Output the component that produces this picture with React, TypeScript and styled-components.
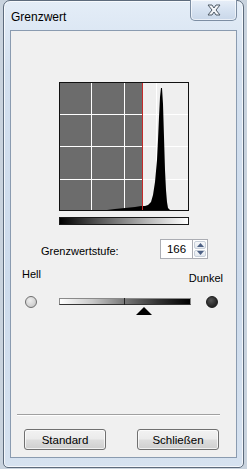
import React from 'react';
import styled, { createGlobalStyle } from 'styled-components';

const GlobalStyle = createGlobalStyle`
  html, body {
    margin: 0;
    padding: 0;
    background: #c9d3de;
    font-family: "Liberation Sans", Arial, sans-serif;
    font-size: 11px;
    color: #000;
  }
`;

const Window = styled.div`
  box-sizing: border-box;
  margin-left: 3px;
  width: 241px;
  height: 468px;
  border: 1px solid #5d6b7c;
  border-radius: 7px 7px 5px 5px;
  background: linear-gradient(180deg, #e4edf7 0%, #d3e0ef 15%, #cddbec 60%, #d6e2f0 100%);
  box-shadow: inset 0 0 0 1px rgba(255, 255, 255, 0.7);
  display: flex;
  flex-direction: column;
  padding: 0 6px 9px 6px;
`;

const TitleBar = styled.div`
  height: 29px;
  display: flex;
  align-items: flex-start;
  justify-content: space-between;
`;

const Title = styled.span`
  margin-top: 9px;
  margin-left: 1px;
  font-size: 12px;
  color: #000;
`;

const CloseButton = styled.div`
  box-sizing: border-box;
  width: 47px;
  height: 21px;
  margin-top: -1px;
  border: 1px solid #7d8ea3;
  border-top: none;
  border-radius: 0 0 5px 5px;
  background: linear-gradient(180deg, #e8eff8 0%, #d6e2f1 50%, #c9d7e9 100%);
  box-shadow: inset 0 0 0 1px rgba(255, 255, 255, 0.6);
  display: flex;
  align-items: center;
  justify-content: center;
`;

const Client = styled.div`
  flex: 1;
  border: 1px solid #8a9bb0;
  background: #f0f0f0;
  display: flex;
  flex-direction: column;
`;

const HistoBlock = styled.div`
  margin-top: 51px;
  padding-left: 48px;
  display: flex;
  flex-direction: column;
`;

const HistoBox = styled.div`
  width: 130px;
  height: 129px;
  display: flex;
`;

const GradientBar = styled.div`
  box-sizing: border-box;
  margin-top: 6px;
  width: 130px;
  height: 8px;
  border: 1px solid #1a1a1a;
  background: linear-gradient(90deg, #000 0%, #555 30%, #bbb 70%, #fff 100%);
`;

const LevelRow = styled.div`
  margin-top: 14px;
  padding-left: 30px;
  display: flex;
  align-items: center;
  height: 20px;
`;

const LevelLabel = styled.span`
  width: 119px;
  padding-top: 3px;
`;

const SpinInput = styled.div`
  box-sizing: border-box;
  width: 32px;
  height: 20px;
  border: 1px solid #abadb3;
  border-right: none;
  background: #fff;
  display: flex;
  align-items: center;
  justify-content: center;
  font-size: 11.5px;
`;

const SpinButtons = styled.div`
  box-sizing: border-box;
  width: 16px;
  height: 20px;
  border: 1px solid #abadb3;
  display: flex;
  flex-direction: column;
  background: #fff;
  padding: 1px;
  gap: 1px;
`;

const SpinHalf = styled.div`
  flex: 1;
  border: 1px solid #c7cfd9;
  border-radius: 2px;
  background: linear-gradient(180deg, #f6f8fa 0%, #e3e8ee 100%);
  display: flex;
  align-items: center;
  justify-content: center;
`;

const EndLabels = styled.div`
  margin-top: 9px;
  padding: 0 13px 0 11px;
  display: flex;
  justify-content: space-between;
  height: 25px;
`;

const EndLabel = styled.span<{ $low?: boolean }>`
  margin-top: ${p => (p.$low ? '4px' : '0')};
`;

const SliderRow = styled.div`
  padding-left: 14px;
  display: flex;
  align-items: flex-start;
  height: 22px;
`;

const Knob = styled.div<{ $dark?: boolean }>`
  box-sizing: border-box;
  width: 12px;
  height: 12px;
  margin-top: 3px;
  border-radius: 50%;
  border: 1px solid ${p => (p.$dark ? '#1a1a1a' : '#6e6e6e')};
  background: ${p =>
    p.$dark
      ? 'radial-gradient(circle at 40% 35%, #555 0%, #2a2a2a 60%, #1e1e1e 100%)'
      : 'radial-gradient(circle at 40% 35%, #eee 0%, #d2d2d2 60%, #bcbcbc 100%)'};
`;

const Track = styled.div`
  margin: 0 15px 0 22px;
  width: 132px;
  display: flex;
  flex-direction: column;
  align-items: stretch;
`;

const TrackBar = styled.div`
  box-sizing: border-box;
  position: relative;
  height: 7px;
  margin-top: 5px;
  border: 1px solid #8a8a8a;
  border-bottom-color: #333;
  background: linear-gradient(90deg, #fff 0%, #c8c8c8 25%, #777 50%, #333 75%, #000 100%);
`;

const Tick = styled.div`
  position: absolute;
  left: 64px;
  top: -1px;
  bottom: -1px;
  width: 1px;
  background: #222;
`;

const Pointer = styled.div`
  margin-top: 2px;
  margin-left: 77px;
  width: 0;
  height: 0;
  border-left: 8px solid transparent;
  border-right: 8px solid transparent;
  border-bottom: 8px solid #000;
`;

const Spacer = styled.div`
  flex: 1;
`;

const Separator = styled.div`
  margin: 0 16px 0 6px;
  height: 1px;
  background: #a0a0a0;
  border-bottom: 1px solid #fff;
`;

const ButtonRow = styled.div`
  margin-top: 13px;
  margin-bottom: 7px;
  padding: 0 17px 0 13px;
  display: flex;
  justify-content: space-between;
`;

const Button = styled.button`
  box-sizing: border-box;
  width: 82px;
  height: 21px;
  border: 1px solid #707070;
  border-radius: 3px;
  background: linear-gradient(180deg, #f2f2f2 0%, #ebebeb 48%, #dddddd 52%, #cfcfcf 100%);
  box-shadow: inset 0 0 0 1px rgba(255, 255, 255, 0.7);
  font-family: "Liberation Sans", Arial, sans-serif;
  font-size: 11.5px;
  color: #000;
  padding: 0;
`;

const Histogram = () => (
  <svg width="130" height="129" viewBox="0 0 130 129">
    <rect x="0" y="0" width="130" height="129" fill="#efefef" />
    <rect x="0" y="0" width="83" height="129" fill="#6c6c6c" />
    {[32, 65, 97].map(x => (
      <line key={'v' + x} x1={x + 0.5} y1="0" x2={x + 0.5} y2="129" stroke="#fff" strokeWidth="1" />
    ))}
    {[32, 64, 97].map(y => (
      <line key={'h' + y} x1="0" y1={y + 0.5} x2="130" y2={y + 0.5} stroke="#fff" strokeWidth="1" />
    ))}
    <path
      d="M 48,128 L 56,127 L 66,126 L 76,125 L 82,124 L 86,124 L 89,123 L 92,120 L 94,113 L 96,100 L 98,78 L 99,58 L 100,35 L 101,15 L 102,6 L 103,6 L 104,22 L 105,55 L 106,88 L 107,108 L 108,120 L 109,126 L 111,128 Z"
      fill="#000"
    />
    <line x1="83.5" y1="0" x2="83.5" y2="129" stroke="#c42a2a" strokeWidth="1" />
    <rect x="0.5" y="0.5" width="129" height="128" fill="none" stroke="#111" strokeWidth="1" />
  </svg>
);

const CloseGlyph = () => (
  <svg width="18" height="14" viewBox="0 0 18 14">
    <path
      d="M3 2 L7 2 L9 5 L11 2 L15 2 L11 7 L15 12 L11 12 L9 9 L7 12 L3 12 L7 7 Z"
      fill="#f4f6f9"
      stroke="#4f5a66"
      strokeWidth="1"
      strokeLinejoin="round"
    />
  </svg>
);

const Arrow = ({ up }: { up?: boolean }) => (
  <svg width="7" height="4" viewBox="0 0 7 4">
    <path d={up ? 'M0 4 L3.5 0 L7 4 Z' : 'M0 0 L3.5 4 L7 0 Z'} fill="#4d6185" />
  </svg>
);

export default function App() {
  return (
    <>
      <GlobalStyle />
      <Window>
        <TitleBar>
          <Title>Grenzwert</Title>
          <CloseButton>
            <CloseGlyph />
          </CloseButton>
        </TitleBar>
        <Client>
          <HistoBlock>
            <HistoBox>
              <Histogram />
            </HistoBox>
            <GradientBar />
          </HistoBlock>
          <LevelRow>
            <LevelLabel>Grenzwertstufe:</LevelLabel>
            <SpinInput>166</SpinInput>
            <SpinButtons>
              <SpinHalf>
                <Arrow up />
              </SpinHalf>
              <SpinHalf>
                <Arrow />
              </SpinHalf>
            </SpinButtons>
          </LevelRow>
          <EndLabels>
            <EndLabel>Hell</EndLabel>
            <EndLabel $low>Dunkel</EndLabel>
          </EndLabels>
          <SliderRow>
            <Knob />
            <Track>
              <TrackBar>
                <Tick />
              </TrackBar>
              <Pointer />
            </Track>
            <Knob $dark />
          </SliderRow>
          <Spacer />
          <Separator />
          <ButtonRow>
            <Button>Standard</Button>
            <Button>Schließen</Button>
          </ButtonRow>
        </Client>
      </Window>
    </>
  );
}
